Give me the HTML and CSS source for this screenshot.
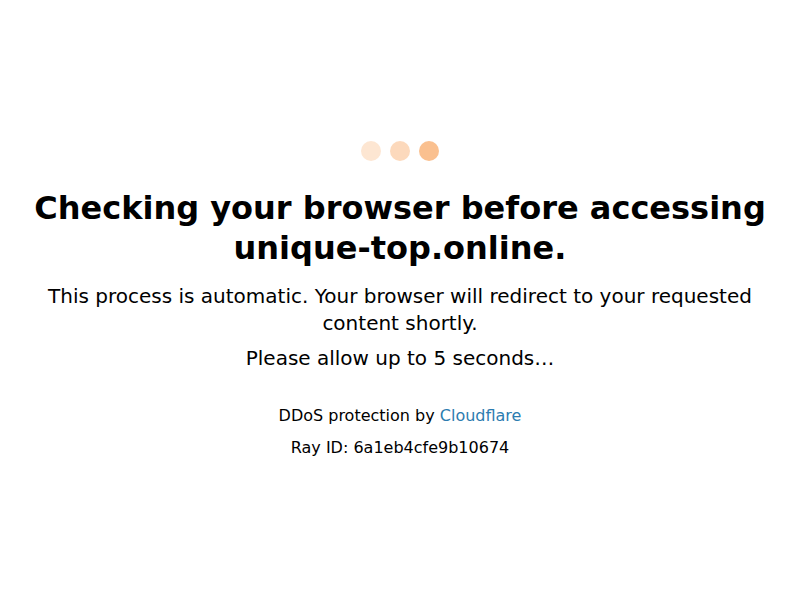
FILE: index.html
```html
<!DOCTYPE html>
<html lang="en">
<head>
  <meta charset="UTF-8">
  <meta name="viewport" content="width=device-width, initial-scale=1">
  <title>Just a moment...</title>
  <link rel="stylesheet" href="styles.css">
</head>
<body>
  <div class="wrapper">
    <div class="content">
      <!-- spinner -->
      <div class="spinner">
        <div class="bubble bubble-1"></div>
        <div class="bubble bubble-2"></div>
        <div class="bubble bubble-3"></div>
      </div>

      <h1>Checking your browser before accessing unique-top.online.</h1>

      <p>This process is automatic. Your browser will redirect to your requested content shortly.</p>
      <p>Please allow up to 5 seconds&hellip;</p>

      <div class="attribution">
        DDoS protection by <a href="#">Cloudflare</a>
        <span class="ray-id">Ray ID: <code>6a1eb4cfe9b10674</code></span>
      </div>
    </div>
  </div>
</body>
</html>
```

FILE: styles.css
```css
html, body { width: 100%; height: 100%; margin: 0; padding: 0; }
body { background: #ffffff; color: #000000; font-family: "DejaVu Sans", sans-serif; font-size: 16px; line-height: 1.7em; }
.wrapper { display: flex; align-items: center; justify-content: center; min-height: 100%; box-sizing: border-box; padding: 21px 20px 20px; }
.content { width: 100%; text-align: center; }
.spinner { margin: 0 auto 27px auto; display: flex; justify-content: center; gap: 9px; }
.bubble { width: 20px; height: 20px; border-radius: 50%; background: #f58220; }
.bubble-1 { opacity: 0.2; }
.bubble-2 { opacity: 0.3; }
.bubble-3 { opacity: 0.5; }
h1 { font-weight: 700; margin: 16px 0 15px; font-size: 32px; line-height: 1.25; }
p { font-size: 20px; font-weight: 400; margin: 8px 0; }
.attribution { margin-top: 32px; font-size: 16px; line-height: 1.5; }
.ray-id { display: block; margin-top: 8px; }
.ray-id code { font-family: inherit; }
a { color: #2c7cb0; text-decoration: none; }
```
